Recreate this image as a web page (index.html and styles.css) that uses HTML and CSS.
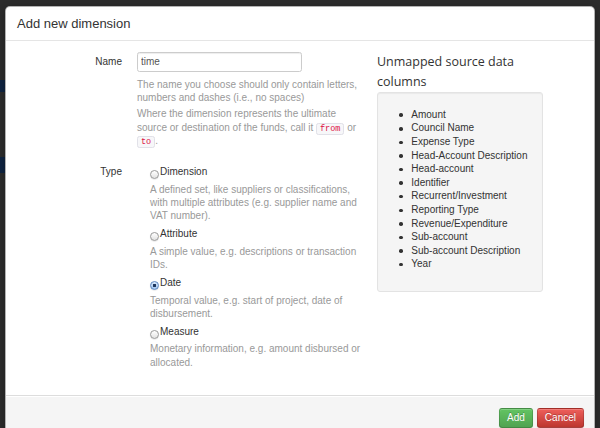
FILE: index.html
```html
<!DOCTYPE html>
<html lang="en">
<head>
<meta charset="utf-8">
<title>Add new dimension</title>
<link rel="stylesheet" href="styles.css">
</head>
<body>
<div class="modal">
  <div class="modal-header">
    <h3 class="modal-title">Add new dimension</h3>
  </div>
  <div class="modal-body">
    <form class="dim-form">
      <div class="group">
        <label class="control-label">Name</label>
        <div class="controls">
          <input class="text-input" type="text" value="time">
          <p class="help first">The name you choose should only contain letters, numbers and dashes (i.e., no spaces)</p>
          <p class="help">Where the dimension represents the ultimate source or destination of the funds, call it <code class="code">from</code> or <code class="code">to</code>.</p>
        </div>
      </div>
      <div class="group type-group">
        <label class="control-label">Type</label>
        <div class="controls options">
          <div class="option">
            <label class="radio"><span class="radio-btn"></span>Dimension</label>
            <p class="help">A defined set, like suppliers or classifications, with multiple attributes (e.g. supplier name and VAT number).</p>
          </div>
          <div class="option">
            <label class="radio"><span class="radio-btn"></span>Attribute</label>
            <p class="help">A simple value, e.g. descriptions or transaction IDs.</p>
          </div>
          <div class="option">
            <label class="radio"><span class="radio-btn checked"></span>Date</label>
            <p class="help">Temporal value, e.g. start of project, date of disbursement.</p>
          </div>
          <div class="option">
            <label class="radio"><span class="radio-btn"></span>Measure</label>
            <p class="help">Monetary information, e.g. amount disbursed or allocated.</p>
          </div>
        </div>
      </div>
    </form>
    <div class="side">
      <h4 class="side-title">Unmapped source data columns</h4>
      <div class="well">
        <ul class="col-list">
          <li>Amount</li>
          <li>Council Name</li>
          <li>Expense Type</li>
          <li>Head-Account Description</li>
          <li>Head-account</li>
          <li>Identifier</li>
          <li>Recurrent/Investment</li>
          <li>Reporting Type</li>
          <li>Revenue/Expenditure</li>
          <li>Sub-account</li>
          <li>Sub-account Description</li>
          <li>Year</li>
        </ul>
      </div>
    </div>
  </div>
  <div class="modal-footer">
    <button class="btn btn-success" type="button">Add</button>
    <button class="btn btn-danger" type="button">Cancel</button>
  </div>
</div>
</body>
</html>
```
FILE: styles.css
```css
* { box-sizing: border-box; }

html, body { margin: 0; }

body {
  height: 428px;
  overflow: hidden;
  padding: 6px 0 0 5px;
  background-color: #2c2c2c;
  background-image:
    linear-gradient(#0e2340, #0e2340),
    linear-gradient(#0e2340, #0e2340);
  background-position: 0 80px, 0 157px;
  background-size: 5px 12px, 5px 16px;
  background-repeat: no-repeat;
  font-family: "Liberation Sans", Arial, sans-serif;
  font-size: 10px;
  line-height: 13.33px;
  color: #333;
}

.modal {
  width: 590px;
  background: #fff;
  border: 1px solid rgba(0, 0, 0, 0.3);
  border-radius: 5px 5px 0 0;
  overflow: hidden;
  box-shadow: 0 2px 7px rgba(0, 0, 0, 0.3);
}

.modal-header {
  padding: 7.2px 11px 5.8px;
  border-bottom: 1px solid #e5e5e5;
}

.modal-title {
  margin: 0;
  font-size: 13px;
  line-height: 20px;
  font-weight: normal;
  color: #333;
}

.modal-body {
  display: flex;
  height: 354px;
  padding: 11px 15px 0;
}

.dim-form {
  width: 343px;
  margin: 0;
}

.group {
  display: grid;
  grid-template-columns: 101px 227px;
  column-gap: 15px;
}

.control-label {
  text-align: right;
  line-height: 20px;
  color: #333;
}

.type-group { margin-top: 18px; }

.type-group .control-label { line-height: 13.33px; }

.text-input {
  display: block;
  width: 165px;
  height: 20px;
  margin: 0;
  padding: 0 3px;
  border: 1px solid #ccc;
  border-radius: 2.5px;
  font: 10px "Liberation Sans", Arial, sans-serif;
  color: #555;
  box-shadow: inset 0 1px 1px rgba(0, 0, 0, 0.075);
}

.help {
  margin: 2.7px 0 0;
  color: #999;
}

.help.first { margin-top: 5.9px; }

.code {
  font-family: "Liberation Mono", monospace;
  font-size: 8.5px;
  line-height: 9px;
  padding: 0 3px;
  color: #dd1144;
  background: #f7f7f9;
  border: 1px solid #e1e1e8;
  border-radius: 2.5px;
}

.options { padding-left: 13px; }

.option + .option { margin-top: 4.4px; }

.radio {
  display: block;
  color: #333;
}

.option .help { margin-top: 4.3px; }

.radio-btn {
  display: inline-block;
  width: 9px;
  height: 9px;
  margin-right: 1px;
  margin-bottom: -1.5px;
  vertical-align: -2.5px;
  border-radius: 50%;
  border: 1px solid #9a9a9a;
  background: linear-gradient(#ffffff, #e2e2e2);
  box-shadow: 0 0.5px 1px rgba(0, 0, 0, 0.15);
}

.radio-btn.checked {
  border-color: #5d87c0;
  background:
    radial-gradient(circle, #1c355c 0 1.4px, transparent 1.8px),
    linear-gradient(#d8e8fb, #9fc3ee);
}

.side {
  width: 166px;
  margin-left: 13px;
}

.side-title {
  margin: 0;
  font-family: "Open Sans", sans-serif;
  font-size: 12.5px;
  line-height: 20.5px;
  font-weight: normal;
  color: #333;
}

.well {
  margin-top: -0.7px;
  padding: 14.5px 13px 19.7px;
  background: #f5f5f5;
  border: 1px solid #e3e3e3;
  border-radius: 3px;
  box-shadow: inset 0 1px 1px rgba(0, 0, 0, 0.05);
}

.col-list {
  margin: 0;
  padding-left: 20.3px;
  list-style: none;
  line-height: 13.6px;
}

.col-list li::before {
  content: "";
  display: inline-block;
  width: 3.5px;
  height: 3.5px;
  margin-left: -12.3px;
  margin-right: 8.8px;
  border-radius: 50%;
  background: #333;
  vertical-align: middle;
}

.modal-footer {
  display: flex;
  justify-content: flex-end;
  gap: 4px;
  padding: 12px 10px 10px;
  background: #f5f5f5;
  border-top: 1px solid #ddd;
  box-shadow: inset 0 1px 0 #fff;
}

.btn {
  height: 20px;
  margin: 0;
  padding: 0 7px;
  font: 10px/18px "Liberation Sans", Arial, sans-serif;
  color: #fff;
  text-shadow: 0 -1px 0 rgba(0, 0, 0, 0.25);
  border: 1px solid rgba(0, 0, 0, 0.15);
  border-bottom-color: rgba(0, 0, 0, 0.3);
  border-radius: 3px;
  box-shadow: inset 0 1px 0 rgba(255, 255, 255, 0.2), 0 1px 2px rgba(0, 0, 0, 0.05);
}

.btn-success { background: linear-gradient(#62c462, #51a351); }

.btn-danger { background: linear-gradient(#ee5f5b, #bd362f); }
```
